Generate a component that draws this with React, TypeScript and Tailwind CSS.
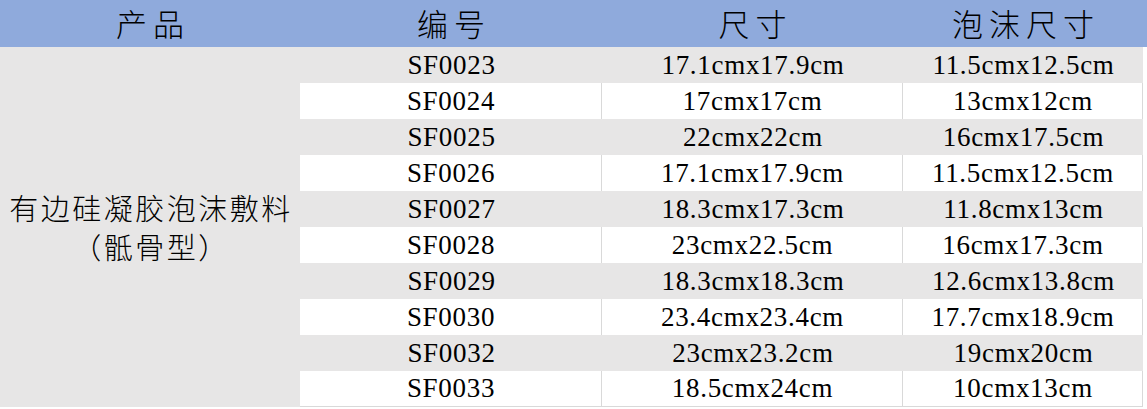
const rows = [
  ["SF0023", "17.1cmx17.9cm", "11.5cmx12.5cm"],
  ["SF0024", "17cmx17cm", "13cmx12cm"],
  ["SF0025", "22cmx22cm", "16cmx17.5cm"],
  ["SF0026", "17.1cmx17.9cm", "11.5cmx12.5cm"],
  ["SF0027", "18.3cmx17.3cm", "11.8cmx13cm"],
  ["SF0028", "23cmx22.5cm", "16cmx17.3cm"],
  ["SF0029", "18.3cmx18.3cm", "12.6cmx13.8cm"],
  ["SF0030", "23.4cmx23.4cm", "17.7cmx18.9cm"],
  ["SF0032", "23cmx23.2cm", "19cmx20cm"],
  ["SF0033", "18.5cmx24cm", "10cmx13cm"],
];

const cjk = "font-['Liberation_Serif','Noto_Sans_CJK_SC',serif]";

const App = () => {
  return (
    <div className={`w-[1147px] h-[409px] bg-white text-black ${cjk}`}>
      <div className="grid grid-cols-[300px_302px_301px_240px_4px] grid-rows-[47px_repeat(10,36px)]">
        {/* Header */}
        {["产品", "编号", "尺寸", "泡沫尺寸"].map((h) => (
          <div
            key={h}
            className="bg-[#8faadc] flex items-center justify-center text-[31px] tracking-[6px] pl-[6px] font-['Noto_Sans_CJK_SC',sans-serif] font-light"
          >
            {h}
          </div>
        ))}
        <div className="bg-[#8faadc]" />

        {/* Merged product cell */}
        <div className="row-start-2 row-span-10 col-start-1 bg-[#e7e6e6] flex flex-col items-center justify-center text-[29px] leading-[39px] tracking-[2.5px] pl-[2px] font-['Noto_Sans_CJK_SC',sans-serif] font-light">
          <span>有边硅凝胶泡沫敷料</span>
          <span>（骶骨型）</span>
        </div>

        {rows.map((r, i) => {
          const gray = i % 2 === 0;
          const last = i === rows.length - 1;
          const cell = gray
            ? "bg-[#e7e6e6]"
            : `bg-white border-r border-[#d9d9d9] ${last ? "border-b" : ""}`;
          return [
            ...r.map((v, j) => (
              <div
                key={`${i}-${j}`}
                className={`${cell} flex items-center justify-center text-[27px] tracking-[0.7px] pl-[1px] font-['Liberation_Serif',serif]`}
              >
                {v}
              </div>
            )),
            <div key={`${i}-e`} className="bg-white" />,
          ];
        })}
      </div>
    </div>
  );
};

export default App;
